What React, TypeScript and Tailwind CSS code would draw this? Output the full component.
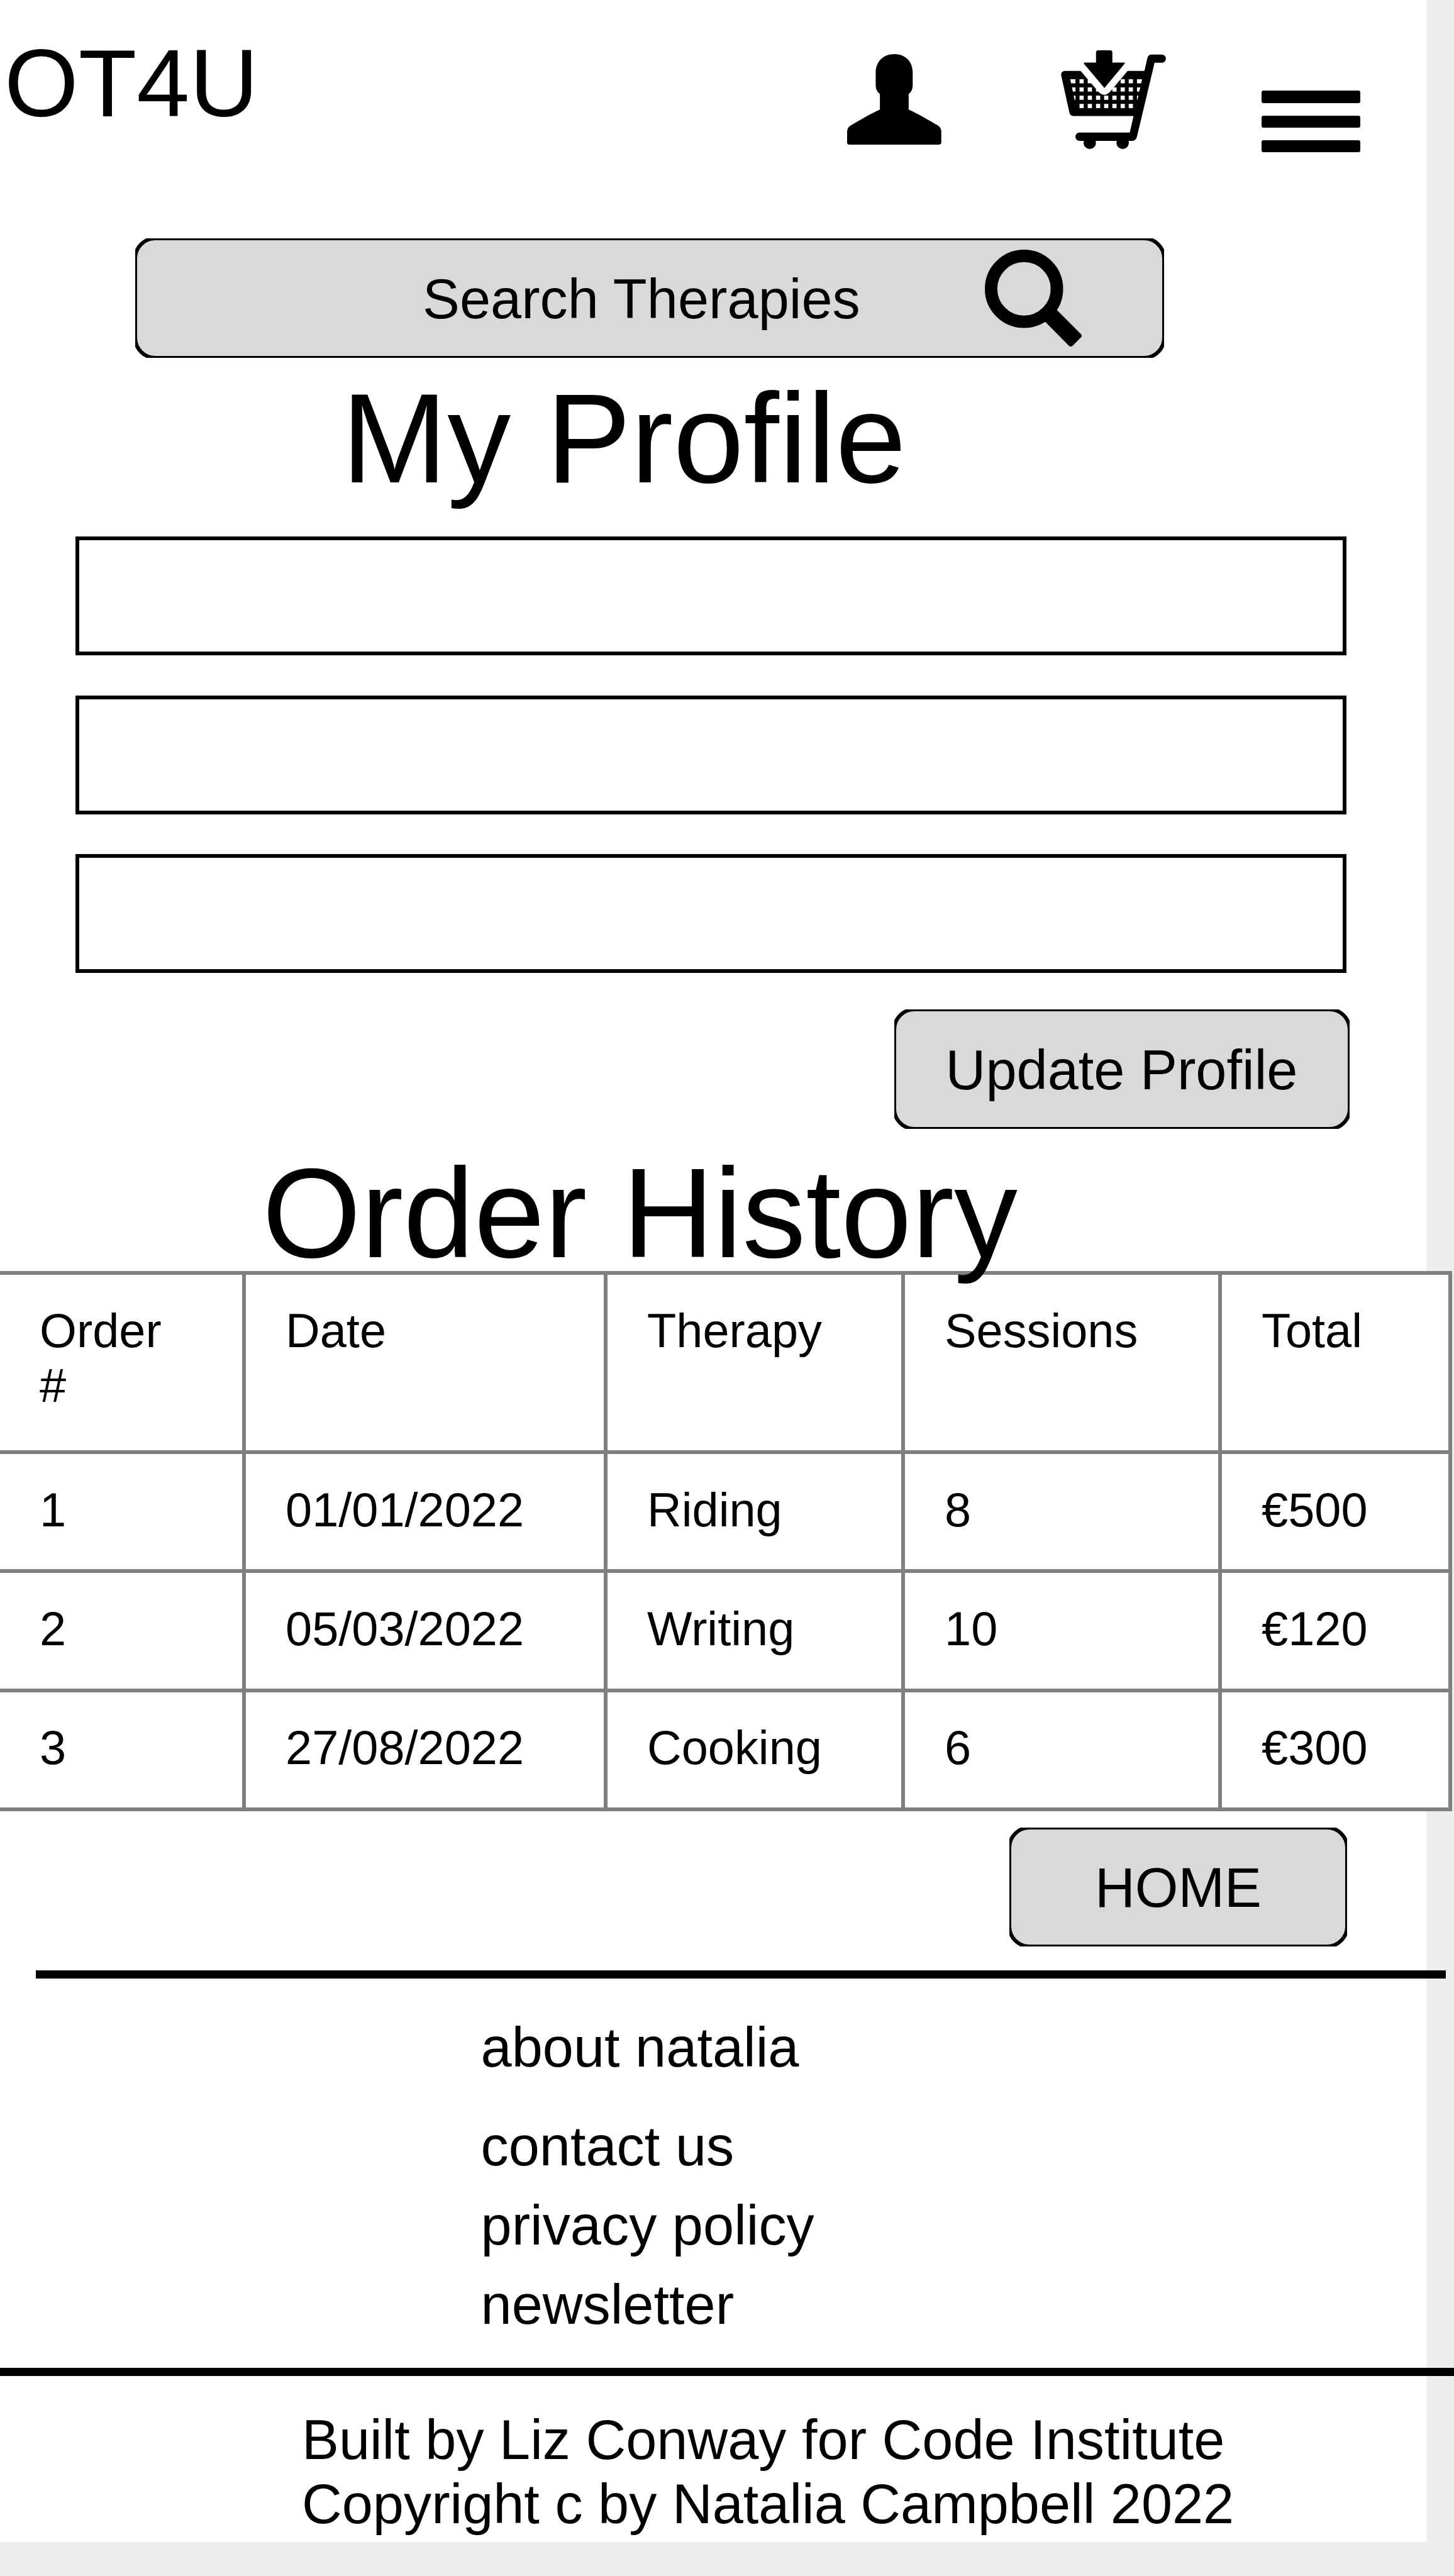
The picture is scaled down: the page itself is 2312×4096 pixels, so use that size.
import type { ReactNode } from "react";

function UserIcon() {
  return (
    <svg className="mt-[86px] ml-[1347px] h-[144px] w-[150px] shrink-0" viewBox="186 168 607 580" preserveAspectRatio="none">
      <path d="M489 168C560 168 608 215 608 287V372Q606 405 582 424V523C640 549 710 590 770 625Q792 640 792 664V736Q791 747 780 748H199Q187 747 186 736V664Q186 640 209 625C270 590 338 549 397 523V424Q372 405 370 372V287C370 215 420 168 489 168Z" />
    </svg>
  );
}

const holeColumns = [190, 269, 322, 375, 427, 480, 533, 585, 638];
const holeRows = [326, 379, 432, 485];

function CartIcon() {
  return (
    <svg className="mt-[79.5px] ml-[190px] h-[157px] w-[167px] shrink-0" viewBox="150 141 674 634">
      <clipPath id="basket">
        <path d="M209 326H671L641 459L635 513H243V485Z" />
      </clipPath>
      <path d="M176 273Q150 275 151 300L204 541Q209 563 230 563H616L592 669H269a26.5 26.5 0 0 0 0 53H612Q630 720 638 695L751 221H797a26.5 26.5 0 0 0 0-53H730Q710 169 705 190L686 273Z" />
      <circle cx="335" cy="735" r="40" />
      <circle cx="546" cy="735" r="40" />
      <g fill="#fff" clipPath="url(#basket)">
        {holeRows.map((y) =>
          holeColumns.map((x) => (
            <rect key={`${x}-${y}`} x={x} y={y} width={x === 190 ? 53 : x === 638 ? 40 : 27} height={27} />
          )),
        )}
      </g>
      <path fill="#fff" d="M276 273L391 408Q428 446 465 408L578 273V262H276Z" />
      <path d="M388 141H467Q480 142 480 154V220H557Q562 222 559 227L429 383L297 227Q295 222 300 220H375V154Q376 142 388 141Z" />
    </svg>
  );
}

function MenuIcon() {
  return (
    <div className="mt-[144.4px] ml-[152px] flex w-[157px] shrink-0 flex-col gap-[19.6px]">
      <div className="h-[19.6px] rounded-[3px] bg-black" />
      <div className="h-[19.6px] rounded-[3px] bg-black" />
      <div className="h-[19.6px] rounded-[3px] bg-black" />
    </div>
  );
}

function SearchIcon() {
  return (
    <svg className="ml-[198px] h-[154px] w-[154px] shrink-0" viewBox="169 132 621 621">
      <circle cx="420" cy="383" r="211" fill="none" stroke="#000" strokeWidth="80" />
      <path d="M590 478L786 674Q794 684 786 694L731 749Q720 757 709 749L515 553Z" />
    </svg>
  );
}

/* Rounded grey box whose heavy outline is cropped by its bounding rectangle. */
function Box({ className, children }: { className: string; children: ReactNode }) {
  return (
    <div className={`flex overflow-hidden ${className}`}>
      <div className="-m-[3px] flex flex-1 items-center rounded-[35px] border-[6px] border-black bg-[#d9d9d9]">
        {children}
      </div>
    </div>
  );
}

const orders = [
  ["1", "01/01/2022", "Riding", "8", "€500"],
  ["2", "05/03/2022", "Writing", "10", "€120"],
  ["3", "27/08/2022", "Cooking", "6", "€300"],
];

function Row({ cells, className }: { cells: string[]; className: string }) {
  return (
    <div className={`grid grid-cols-[391px_575px_473px_504px_366px] ${className}`}>
      {cells.map((cell) => (
        <div
          key={cell}
          className="border-r-[6px] border-b-[6px] border-[#808080] pt-[44.5px] pl-[63px] text-[75.75px] leading-[87.7px] whitespace-pre-line"
        >
          {cell}
        </div>
      ))}
    </div>
  );
}

export default function App() {
  return (
    <div className="h-[4096px] w-[2312px] overflow-hidden bg-[#eee] font-['Liberation_Sans',Arial,sans-serif] text-black">
      <div className="flex h-[4042px] w-[2268px] flex-col bg-white">
        <header className="flex h-[379px] shrink-0 items-start">
          <div className="mt-[57px] -mr-[407px] ml-[7px] w-[400px] text-[151.4px] leading-none">OT4U</div>
          <UserIcon />
          <CartIcon />
          <MenuIcon />
        </header>

        <Box className="ml-[215px] h-[190px] w-[1636px] shrink-0">
          <span className="ml-[454px] w-[695.5px] pt-[3px] text-[88.35px] leading-[88px] whitespace-nowrap">
            Search Therapies
          </span>
          <SearchIcon />
        </Box>

        <h1 className="mt-[28px] ml-[543px] h-[256px] shrink-0 text-[202px] leading-[201px]">My Profile</h1>

        <div className="ml-[120px] flex w-[2021px] shrink-0 flex-col gap-[63.5px]">
          <div className="h-[189px] border-[6px] border-black" />
          <div className="h-[189px] border-[6px] border-black" />
          <div className="h-[189px] border-[6px] border-black" />
        </div>

        <Box className="mt-[58px] ml-[1421.5px] h-[190px] w-[724px] shrink-0">
          <span className="flex-1 pt-[3px] text-center text-[88.35px] leading-[88px]">Update Profile</span>
        </Box>

        <h2 className="relative z-10 mt-[34px] ml-[417px] h-[192px] shrink-0 text-[202px] leading-[201px] whitespace-nowrap">
          Order History
        </h2>

        <div className="w-[2309px] shrink-0 border-t-[6px] border-[#808080] bg-white">
          <Row cells={["Order\n#", "Date", "Therapy", "Sessions", "Total"]} className="h-[285px]" />
          {orders.map((order) => (
            <Row key={order[0]} cells={order} className="h-[189.4px]" />
          ))}
        </div>

        <Box className="mt-[25.8px] ml-[1605px] h-[189px] w-[537px] shrink-0">
          <span className="flex-1 pt-[3px] text-center text-[88.35px] leading-[88px]">HOME</span>
        </Box>

        <div className="mt-[38.5px] ml-[57px] h-[13px] w-[2242px] shrink-0 bg-black" />

        <nav className="ml-[764.5px] flex shrink-0 flex-col pt-[65.5px] text-[88.35px]">
          <a className="h-[138px] leading-[88px]">about natalia</a>
          <a className="leading-[126.2px]">contact us</a>
          <a className="leading-[126.2px]">privacy policy</a>
          <a className="leading-[126.2px]">newsletter</a>
        </nav>

        <div className="mt-[36.5px] h-[13px] w-[2312px] shrink-0 bg-black" />

        <footer className="mt-[50.5px] ml-[480px] text-[88.3px] leading-[102.6px] whitespace-nowrap">
          <p>Built by Liz Conway for Code Institute</p>
          <p>Copyright c by Natalia Campbell 2022</p>
        </footer>
      </div>
    </div>
  );
}
